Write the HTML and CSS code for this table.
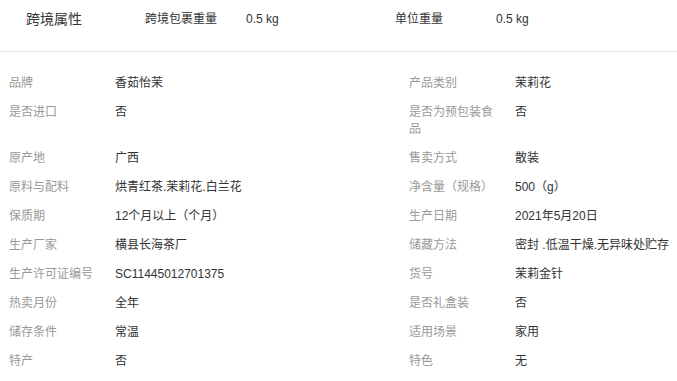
FILE: index.html
```html
<!DOCTYPE html>
<html lang="zh-CN">
<head>
<meta charset="utf-8">
<link rel="stylesheet" href="styles.css">
</head>
<body>
<div class="page">
  <div class="header">
    <div class="title">跨境属性</div>
    <div class="hpair"><span class="hlabel">跨境包裹重量</span><span class="hvalue">0.5 kg</span></div>
    <div class="hpair"><span class="hlabel">单位重量</span><span class="hvalue">0.5 kg</span></div>
  </div>
  <div class="grid">
    <div class="row"><span class="label">品牌</span><span class="value">香茹怡茉</span></div>
    <div class="row"><span class="label">产品类别</span><span class="value">茉莉花</span></div>
    <div class="row"><span class="label">是否进口</span><span class="value">否</span></div>
    <div class="row"><span class="label">是否为预包装食品</span><span class="value">否</span></div>
    <div class="row"><span class="label">原产地</span><span class="value">广西</span></div>
    <div class="row"><span class="label">售卖方式</span><span class="value">散装</span></div>
    <div class="row"><span class="label">原料与配料</span><span class="value">烘青红茶.茉莉花.白兰花</span></div>
    <div class="row"><span class="label">净含量（规格）</span><span class="value">500（g）</span></div>
    <div class="row"><span class="label">保质期</span><span class="value">12个月以上（个月）</span></div>
    <div class="row"><span class="label">生产日期</span><span class="value">2021年5月20日</span></div>
    <div class="row"><span class="label">生产厂家</span><span class="value">横县长海茶厂</span></div>
    <div class="row"><span class="label">储藏方法</span><span class="value">密封 .低温干燥.无异味处贮存</span></div>
    <div class="row"><span class="label">生产许可证编号</span><span class="value">SC11445012701375</span></div>
    <div class="row"><span class="label">货号</span><span class="value">茉莉金针</span></div>
    <div class="row"><span class="label">热卖月份</span><span class="value">全年</span></div>
    <div class="row"><span class="label">是否礼盒装</span><span class="value">否</span></div>
    <div class="row"><span class="label">储存条件</span><span class="value">常温</span></div>
    <div class="row"><span class="label">适用场景</span><span class="value">家用</span></div>
    <div class="row"><span class="label">特产</span><span class="value">否</span></div>
    <div class="row"><span class="label">特色</span><span class="value">无</span></div>
  </div>
</div>
</body>
</html>
```

FILE: styles.css
```css
* { box-sizing: border-box; }
html, body { margin: 0; padding: 0; background: #fff; }
body {
  font-family: "Liberation Sans", "Noto Sans CJK SC", sans-serif;
  font-size: 12px;
  color: #333;
  overflow: hidden;
}
.page { width: 677px; }
.header {
  display: flex;
  align-items: flex-start;
  height: 52px;
  padding: 10px 0 0 26px;
  border-bottom: 1px solid #e8e8e8;
}
.title {
  width: 119px;
  font-size: 14px;
  line-height: 18px;
  color: #333;
}
.hpair {
  display: flex;
  width: 250px;
  line-height: 18px;
}
.hlabel { width: 101px; }
.grid {
  display: grid;
  grid-template-columns: 400px 1fr;
  padding: 17px 0 0 9px;
}
.row {
  display: flex;
  align-items: flex-start;
  padding: 6px 0;
  line-height: 17px;
}
.label {
  width: 90px;
  margin-right: 16px;
  color: #999;
  flex-shrink: 0;
}
.value { color: #333; white-space: nowrap; }
```
